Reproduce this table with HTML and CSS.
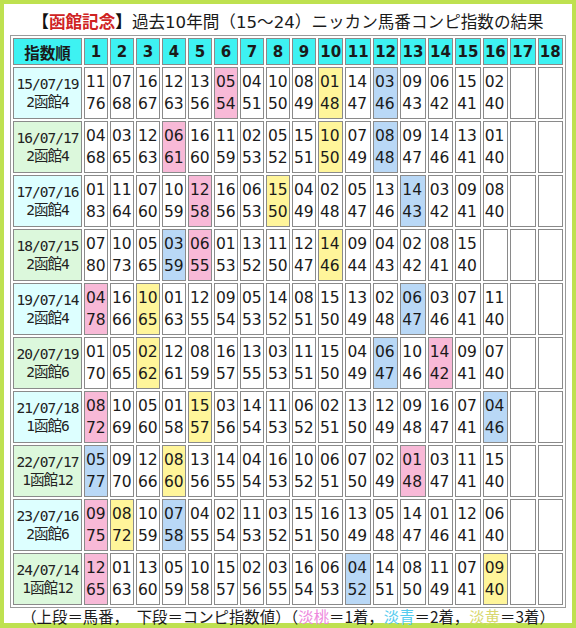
FILE: index.html
```html
<!DOCTYPE html>
<html lang="ja">
<head>
<meta charset="utf-8">
<title>函館記念 コンピ指数</title>
<link rel="stylesheet" href="styles.css">
</head>
<body>
<div class="frame">
  <div class="title"><b>【<span class="red">函館記念</span>】</b>過去10年間（15～24）ニッカン馬番コンピ指数の結果</div>
  <table class="grid">
    <thead>
      <tr>
        <th class="w0 jp">指数順</th>
        <th class="wn">1</th><th class="wn">2</th><th class="wn">3</th><th class="wn">4</th><th class="wn">5</th><th class="wn">6</th><th class="wn">7</th><th class="wn">8</th><th class="wn">9</th>
        <th class="ww">10</th><th class="ww">11</th><th class="ww">12</th><th class="ww">13</th><th class="ww">14</th><th class="ww">15</th><th class="ww">16</th><th class="ww">17</th><th class="ww">18</th>
      </tr>
    </thead>
    <tbody>
      <tr>
        <td class="d c"><span class="l">15/07/19</span><span class="l">2函館4</span></td>
        <td>11<br>76</td><td>07<br>68</td><td>16<br>67</td><td>12<br>63</td><td>13<br>56</td><td class="p">05<br>54</td><td>04<br>51</td><td>10<br>50</td><td>08<br>49</td><td class="y">01<br>48</td><td>14<br>47</td><td class="b">03<br>46</td><td>09<br>43</td><td>06<br>42</td><td>15<br>41</td><td>02<br>40</td><td></td><td></td>
      </tr>
      <tr>
        <td class="d g"><span class="l">16/07/17</span><span class="l">2函館4</span></td>
        <td>04<br>68</td><td>03<br>65</td><td>12<br>63</td><td class="p">06<br>61</td><td>16<br>60</td><td>11<br>59</td><td>02<br>53</td><td>05<br>52</td><td>15<br>51</td><td class="y">10<br>50</td><td>07<br>49</td><td class="b">08<br>48</td><td>09<br>47</td><td>14<br>46</td><td>13<br>41</td><td>01<br>40</td><td></td><td></td>
      </tr>
      <tr>
        <td class="d c"><span class="l">17/07/16</span><span class="l">2函館4</span></td>
        <td>01<br>83</td><td>11<br>64</td><td>07<br>60</td><td>10<br>59</td><td class="p">12<br>58</td><td>16<br>56</td><td>06<br>53</td><td class="y">15<br>50</td><td>04<br>49</td><td>02<br>48</td><td>05<br>47</td><td>13<br>46</td><td class="b">14<br>43</td><td>03<br>42</td><td>09<br>41</td><td>08<br>40</td><td></td><td></td>
      </tr>
      <tr>
        <td class="d g"><span class="l">18/07/15</span><span class="l">2函館4</span></td>
        <td>07<br>80</td><td>10<br>73</td><td>05<br>65</td><td class="b">03<br>59</td><td class="p">06<br>55</td><td>01<br>53</td><td>13<br>52</td><td>11<br>50</td><td>12<br>47</td><td class="y">14<br>46</td><td>09<br>44</td><td>04<br>43</td><td>02<br>42</td><td>08<br>41</td><td>15<br>40</td><td></td><td></td><td></td>
      </tr>
      <tr>
        <td class="d c"><span class="l">19/07/14</span><span class="l">2函館4</span></td>
        <td class="p">04<br>78</td><td>16<br>66</td><td class="y">10<br>65</td><td>01<br>63</td><td>12<br>55</td><td>09<br>54</td><td>05<br>53</td><td>14<br>52</td><td>08<br>51</td><td>15<br>50</td><td>13<br>49</td><td>02<br>48</td><td class="b">06<br>47</td><td>03<br>46</td><td>07<br>41</td><td>11<br>40</td><td></td><td></td>
      </tr>
      <tr>
        <td class="d g"><span class="l">20/07/19</span><span class="l">2函館6</span></td>
        <td>01<br>70</td><td>05<br>65</td><td class="y">02<br>62</td><td>12<br>61</td><td>08<br>59</td><td>16<br>57</td><td>13<br>55</td><td>03<br>53</td><td>11<br>51</td><td>15<br>50</td><td>04<br>49</td><td class="b">06<br>47</td><td>10<br>46</td><td class="p">14<br>42</td><td>09<br>41</td><td>07<br>40</td><td></td><td></td>
      </tr>
      <tr>
        <td class="d c"><span class="l">21/07/18</span><span class="l">1函館6</span></td>
        <td class="p">08<br>72</td><td>10<br>69</td><td>05<br>60</td><td>01<br>58</td><td class="y">15<br>57</td><td>03<br>56</td><td>14<br>54</td><td>11<br>53</td><td>06<br>52</td><td>02<br>51</td><td>13<br>50</td><td>12<br>49</td><td>09<br>48</td><td>16<br>47</td><td>07<br>41</td><td class="b">04<br>46</td><td></td><td></td>
      </tr>
      <tr>
        <td class="d g"><span class="l">22/07/17</span><span class="l">1函館12</span></td>
        <td class="b">05<br>77</td><td>09<br>70</td><td>12<br>66</td><td class="y">08<br>60</td><td>13<br>56</td><td>14<br>55</td><td>04<br>54</td><td>16<br>53</td><td>10<br>52</td><td>06<br>51</td><td>07<br>50</td><td>02<br>49</td><td class="p">01<br>48</td><td>03<br>47</td><td>11<br>41</td><td>15<br>40</td><td></td><td></td>
      </tr>
      <tr>
        <td class="d c"><span class="l">23/07/16</span><span class="l">2函館6</span></td>
        <td class="p">09<br>75</td><td class="y">08<br>72</td><td>10<br>59</td><td class="b">07<br>58</td><td>04<br>55</td><td>02<br>54</td><td>11<br>53</td><td>03<br>52</td><td>15<br>51</td><td>16<br>50</td><td>13<br>49</td><td>05<br>48</td><td>14<br>47</td><td>01<br>46</td><td>12<br>41</td><td>06<br>40</td><td></td><td></td>
      </tr>
      <tr>
        <td class="d g"><span class="l">24/07/14</span><span class="l">1函館12</span></td>
        <td class="p">12<br>65</td><td>01<br>63</td><td>13<br>60</td><td>05<br>59</td><td>10<br>58</td><td>15<br>57</td><td>02<br>56</td><td>03<br>55</td><td>16<br>54</td><td>06<br>53</td><td class="b">04<br>52</td><td>14<br>51</td><td>08<br>50</td><td>11<br>49</td><td>07<br>41</td><td class="y">09<br>40</td><td></td><td></td>
      </tr>
    </tbody>
  </table>
  <div class="note">（上段＝馬番，　下段＝コンピ指数値）（<span class="np">淡桃</span>＝1着，<span class="nb">淡青</span>＝2着，<span class="ny">淡黄</span>＝3着）</div>
</div>
</body>
</html>
```
FILE: styles.css
```css
html, body {
  margin: 0;
  padding: 0;
  background: #ffffff;
}

.frame {
  box-sizing: border-box;
  width: 576px;
  height: 628px;
  border: 4px solid #bee150;
  border-bottom-width: 5px;
  background: #ffffff;
  display: flex;
  flex-direction: column;
  align-items: center;
}

.title {
  margin-top: 5px;
  height: 24px;
  line-height: 24px;
  font-family: "DejaVu Sans", "Noto Sans CJK JP", sans-serif;
  font-size: 16.6px;
  color: #1a1a1a;
  white-space: nowrap;
}

.title b {
  font-family: "Noto Sans CJK JP", sans-serif;
  font-weight: bold;
  color: #111;
}

.red {
  color: #cf2323;
}

.grid {
  margin-top: 2px;
  width: 556px;
  table-layout: fixed;
  border-collapse: separate;
  border-spacing: 2px;
  border: 1px solid #9a9a9a;
}

.grid th,
.grid td {
  box-sizing: border-box;
  border: 1px solid #8a8a8a;
  padding: 0;
}

.grid th {
  height: 27px;
  background: #3ef2f2;
  font-family: "DejaVu Sans", sans-serif;
  font-weight: bold;
  font-size: 15px;
  color: #1a1a1a;
  text-align: center;
  vertical-align: middle;
}

.grid th.jp {
  font-family: "Noto Sans CJK JP", sans-serif;
  font-size: 15.5px;
}

.w0 { width: 69px; }
.wn { width: 24px; }
.ww { width: 25.44px; }

.grid td {
  height: 52px;
  padding-left: 1px;
  font-family: "DejaVu Sans", sans-serif;
  font-size: 15.5px;
  line-height: 22px;
  color: #1a1a1a;
  text-align: left;
  vertical-align: middle;
  white-space: nowrap;
}

.grid td.d {
  padding-left: 0;
  font-family: "DejaVu Sans Mono", "Noto Sans CJK JP", monospace;
  font-size: 14.5px;
  letter-spacing: -0.95px;
  text-align: center;
  color: #222;
}

.l {
  display: block;
  height: 18px;
  line-height: 18px;
}

.c { background: #ddffff; }
.g { background: #dcf8dc; }

.grid td.p { background: #f8b9d7; }
.grid td.y { background: #fff59a; }
.grid td.b { background: #b9d8f6; }

.note {
  margin-top: 0;
  line-height: 16px;
  font-family: "Noto Sans CJK JP", sans-serif;
  font-size: 15.4px;
  color: #1a1a1a;
  white-space: nowrap;
}

.np { color: #ee88dd; }
.nb { color: #55ccee; }
.ny { color: #d8d870; }
```
